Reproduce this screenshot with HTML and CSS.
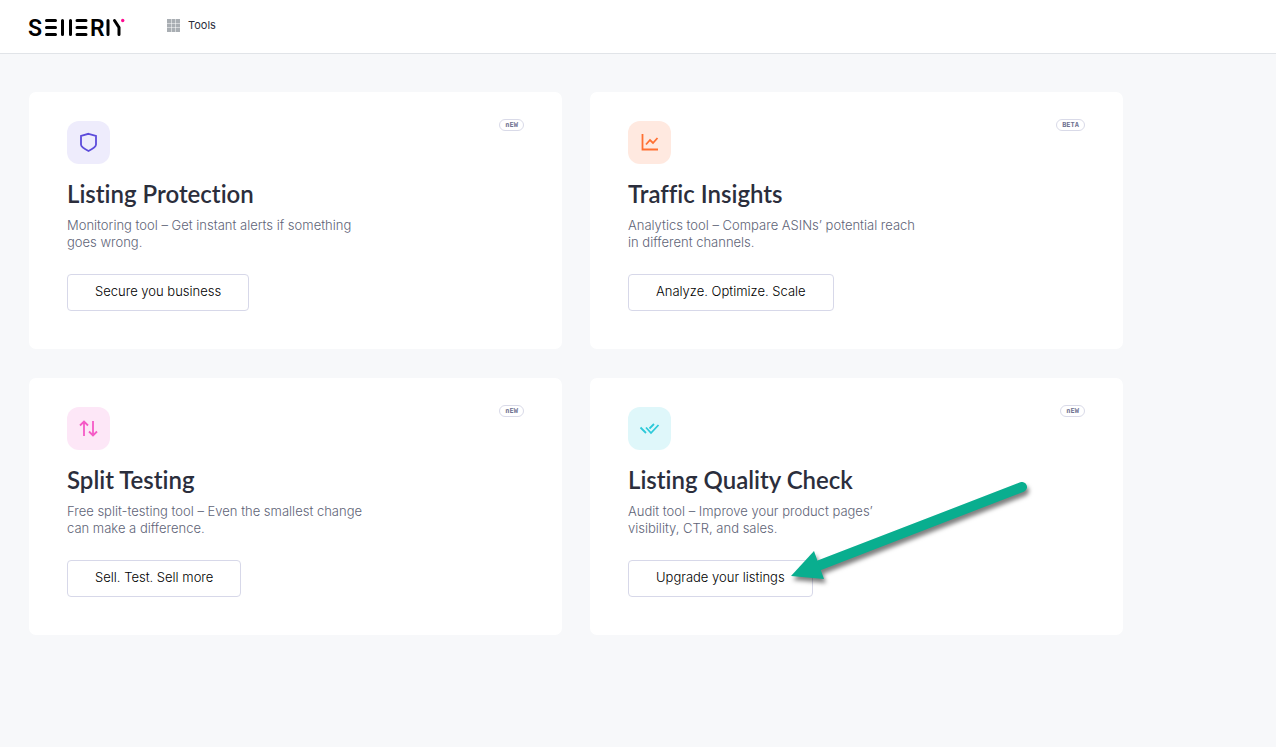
FILE: index.html
```html
<!DOCTYPE html>
<html lang="en">
<head>
<meta charset="utf-8">
<meta name="viewport" content="width=device-width, initial-scale=1">
<title>Sellerly Tools</title>
<link rel="stylesheet" href="styles.css">
</head>
<body>
<header class="header">
  <a class="logo" href="#" aria-label="Sellerly">
    <svg width="98" height="30" viewBox="-1 -5 98 30">
      <text class="logo-letter" x="-1" y="19">S</text>
      <text class="logo-letter" x="61" y="19">R</text>
      <g fill="none" stroke="#000" stroke-width="3" stroke-linecap="round">
        <path d="M17.500 3.500h9M17.500 10.500h9M17.500 17.500h9M33.500 3.500v14M41.500 3.500v14M48 3.500h9M48 10.500h9M48 17.500h9M79 3.500v14M85.500 3.500l4.500 7v7"/>
      </g>
      <circle cx="93.700" cy="3.500" r="1.700" fill="#ff0a91"/>
    </svg>
  </a>
  <a class="tools-link" href="#">
    <svg width="13" height="13" viewBox="0 0 13 13" fill="#a9aeb3">
      <path d="M0 0h4v4H0zM4.500 0h4v4h-4zM9 0h4v4H9zM0 4.500h4v4H0zM4.500 4.500h4v4h-4zM9 4.500h4v4H9zM0 9h4v4H0zM4.500 9h4v4h-4zM9 9h4v4H9z"/>
    </svg>
    Tools
  </a>
</header>
<main class="tools">
  <article class="card">
    <div class="card-top">
      <span class="icon icon-violet">
        <svg width="21" height="21" viewBox="0 0 21 21"><path d="M10.500 1.800l7.500 2.100v8.600c0 2-5 5.200-7.500 6.500C8 17.700 3 14.500 3 12.500V3.900z"/></svg>
      </span>
      <span class="tag">nEW</span>
    </div>
    <h2 class="title">Listing Protection</h2>
    <p class="text">Monitoring tool – Get instant alerts if something<br>goes wrong.</p>
    <button class="button" type="button">Secure you business</button>
  </article>
  <article class="card">
    <div class="card-top">
      <span class="icon icon-orange">
        <svg width="21" height="21" viewBox="0 0 21 21"><path d="M3.500 2v15.500H19M7 12.500l4-4.500 3 3L18.500 6"/></svg>
      </span>
      <span class="tag">BETA</span>
    </div>
    <h2 class="title">Traffic Insights</h2>
    <p class="text">Analytics tool – Compare ASINs’ potential reach<br>in different channels.</p>
    <button class="button" type="button">Analyze. Optimize. Scale</button>
  </article>
  <article class="card">
    <div class="card-top">
      <span class="icon icon-pink">
        <svg width="21" height="21" viewBox="0 0 21 21"><path d="M6 18V4M2 7.500l4-4 4 4M15 3v14M11 13.500l4 4 4-4"/></svg>
      </span>
      <span class="tag">nEW</span>
    </div>
    <h2 class="title">Split Testing</h2>
    <p class="text">Free split-testing tool – Even the smallest change<br>can make a difference.</p>
    <button class="button" type="button">Sell. Test. Sell more</button>
  </article>
  <article class="card">
    <div class="card-top">
      <span class="icon icon-cyan">
        <svg width="21" height="21" viewBox="0 0 21 21"><path d="M1.500 9.500l5.500 5.500M7 9.500l5 5.500L19.500 7M10.500 10.500L15 6"/></svg>
      </span>
      <span class="tag">nEW</span>
    </div>
    <h2 class="title">Listing Quality Check</h2>
    <p class="text">Audit tool – Improve your product pages’<br>visibility, CTR, and sales.</p>
    <button class="button" type="button">Upgrade your listings</button>
    <svg class="arrow" width="250" height="120" viewBox="0 0 250 120" aria-hidden="true">
      <path d="M232 17L30 95" fill="none" stroke="#09ae8f" stroke-width="10" stroke-linecap="round"/>
      <path d="M1 106l23-25 10 28z" fill="#09ae8f"/>
    </svg>
  </article>
</main>
</body>
</html>
```
FILE: styles.css
```css
* {
  box-sizing: border-box;
}

body {
  margin: 0;
  min-height: 100vh;
  background: #f7f8fa;
  color: #2b2e3c;
  font-family: Inter, "Liberation Sans", sans-serif;
  font-size: 13px;
  font-weight: 300;
}

.header {
  display: flex;
  align-items: center;
  gap: 41px;
  height: 54px;
  padding: 0 28px;
  background: #fff;
  border-bottom: 1px solid #e1e4e8;
}

.logo svg {
  display: block;
}

.logo-letter {
  font-family: Roboto, sans-serif;
  font-size: 23px;
  font-weight: 600;
}

.tools-link {
  display: flex;
  align-items: center;
  gap: 8px;
  padding-bottom: 3px;
  color: #2b2e3c;
  font-size: 11px;
  font-weight: 400;
  text-decoration: none;
}

.tools {
  display: grid;
  grid-template-columns: 1fr 1fr;
  gap: 29px 28px;
  max-width: 1152px;
  padding: 38px 29px;
}

.card {
  position: relative;
  padding: 29px 38px 38px;
  background: #fff;
  border-radius: 7px;
}

.card-top {
  display: flex;
  align-items: flex-start;
  justify-content: space-between;
}

.icon {
  display: grid;
  place-items: center;
  width: 43px;
  height: 43px;
  border-radius: 12px;
}

.icon svg {
  fill: none;
  stroke: currentColor;
  stroke-width: 1.8;
}

.icon-violet {
  background: #eeecfc;
  color: #5c4bdb;
}

.icon-orange {
  background: #ffe9e0;
  color: #ff7032;
}

.icon-pink {
  background: #fde7f7;
  color: #f55ac6;
}

.icon-cyan {
  background: #dff7fa;
  color: #2dc9d9;
}

.tag {
  height: 12px;
  margin-top: -2px;
  padding: 0 5px;
  border: 1px solid #d9dae8;
  border-radius: 6px;
  color: #6f7290;
  font-family: "DejaVu Sans Mono", monospace;
  font-size: 7px;
  font-weight: 700;
  line-height: 10px;
}

.title {
  margin: 14px 0 0;
  font-family: Lato, sans-serif;
  font-size: 24px;
  font-variant-ligatures: none;
  font-weight: 600;
  line-height: 32px;
}

.text {
  margin: 7px 0 23px;
  color: #606477;
  line-height: 17px;
}

.button {
  display: block;
  height: 37px;
  padding: 0 27px 4px;
  background: #fff;
  border: 1px solid #d7d8e9;
  border-radius: 4px;
  color: #000;
  font: inherit;
}

.arrow {
  position: absolute;
  top: 92px;
  left: 200px;
  filter: drop-shadow(2px 4px 2px rgba(0, 0, 0, 0.5));
}
```
